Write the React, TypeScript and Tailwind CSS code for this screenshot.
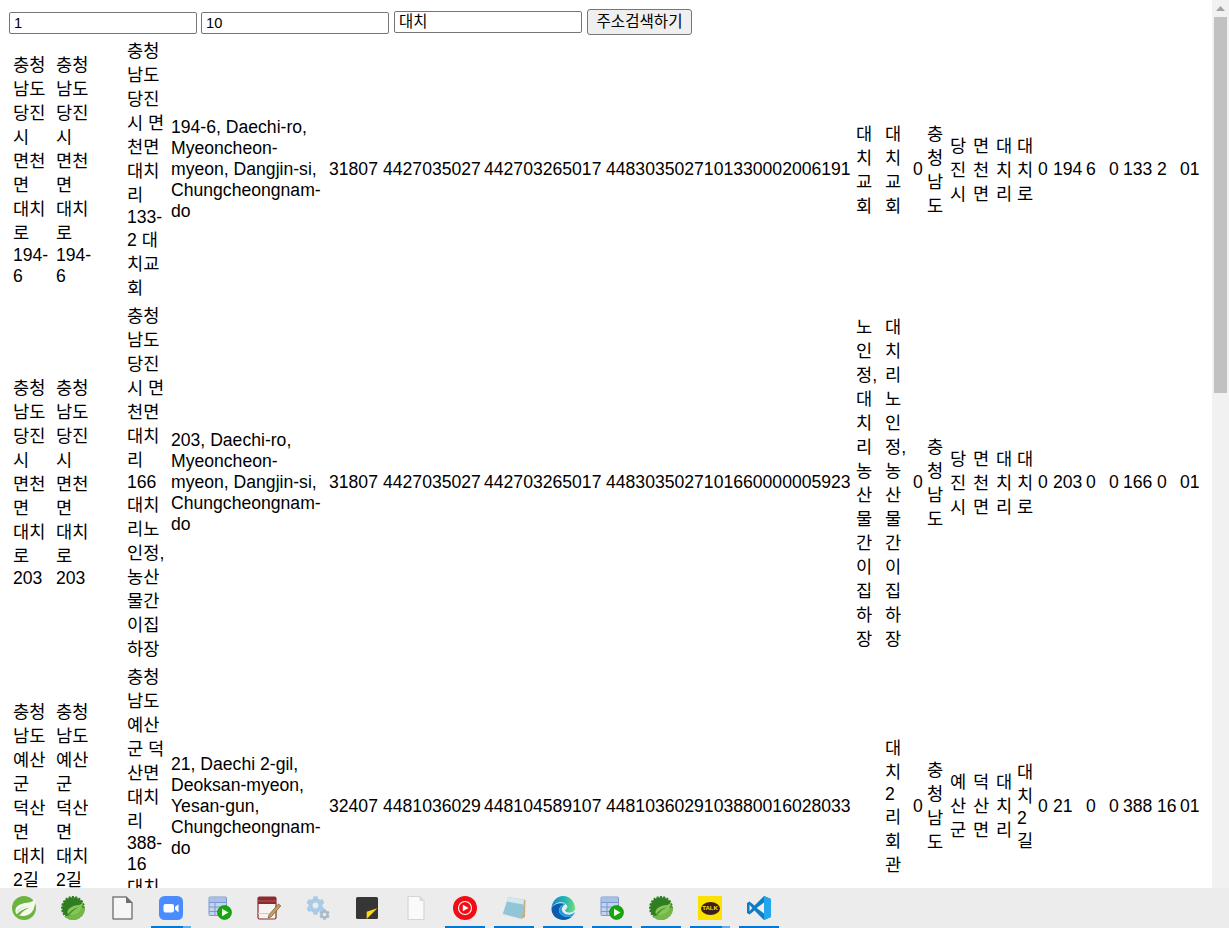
import { FaCog } from "react-icons/fa";

const rows: string[][] = [
  [
    "충청남도 당진시 면천면 대치로 194-6",
    "충청남도 당진시 면천면 대치로 194-6",
    "",
    "충청남도 당진시 면천면 대치리 133-2 대치교회",
    "194-6, Daechi-ro, Myeoncheon-myeon, Dangjin-si, Chungcheongnam-do",
    "31807",
    "4427035027",
    "442703265017",
    "4483035027101330002006191",
    "대치교회",
    "대치교회",
    "0",
    "충청남도",
    "당진시",
    "면천면",
    "대치리",
    "대치로",
    "0",
    "194",
    "6",
    "0",
    "133",
    "2",
    "01",
  ],
  [
    "충청남도 당진시 면천면 대치로 203",
    "충청남도 당진시 면천면 대치로 203",
    "",
    "충청남도 당진시 면천면 대치리 166 대치리노인정, 농산물간이집하장",
    "203, Daechi-ro, Myeoncheon-myeon, Dangjin-si, Chungcheongnam-do",
    "31807",
    "4427035027",
    "442703265017",
    "4483035027101660000005923",
    "노인정, 대치리 농산물간이집하장",
    "대치리 노인정, 농산물간이집하장",
    "0",
    "충청남도",
    "당진시",
    "면천면",
    "대치리",
    "대치로",
    "0",
    "203",
    "0",
    "0",
    "166",
    "0",
    "01",
  ],
  [
    "충청남도 예산군 덕산면 대치2길 21",
    "충청남도 예산군 덕산면 대치2길 21",
    "",
    "충청남도 예산군 덕산면 대치리 388-16 대치2리회관",
    "21, Daechi 2-gil, Deoksan-myeon, Yesan-gun, Chungcheongnam-do",
    "32407",
    "4481036029",
    "448104589107",
    "4481036029103880016028033",
    "",
    "대치2리회관",
    "0",
    "충청남도",
    "예산군",
    "덕산면",
    "대치리",
    "대치2길",
    "0",
    "21",
    "0",
    "0",
    "388",
    "16",
    "01",
  ],
];

const colWidths = [
  "w-[41px]", "w-[41px]", "w-[26px]", "w-[42px]", "w-[156px]", "w-[52px]",
  "w-[99px]", "w-[120px]", "w-[248px]", "w-[27px]", "w-[26px]", "w-[12px]",
  "w-[21px]", "w-[21px]", "w-[21px]", "w-[19px]", "w-[19px]", "w-[13px]",
  "w-[31px]", "w-[21px]", "w-[12px]", "w-[32px]", "w-[21px]", "w-[21px]",
];

// 한글 24px, 라틴 21px 줄 높이
const Mixed = ({ text }: { text: string }) => (
  <>
    {text.split(/([\uAC00-\uD7A3]+)/).map((part, i) =>
      part ? (
        <span key={i} className={i % 2 ? "leading-[24px]" : "leading-[21px]"}>
          {part}
        </span>
      ) : null,
    )}
  </>
);

const Spring = () => (
  <svg width="24" height="24" viewBox="0 0 24 24">
    <circle cx="12" cy="12" r="12" fill="#6db33f" />
    <path d="M23 2.500c-1.500 2.800-4 3.800-8 4.300C9 7.500 4.500 9.500 3.500 13.500c-.6 2.500.5 5 3.500 6 6 1.500 12-.5 14.500-6 1.500-3.500 2-7.500 1.500-11z" fill="#f4f8ef" />
    <path d="M4.500 18.500c3.500-3.800 7.500-5.800 13-7-4.500 2.200-7.500 4.500-10.500 8.500z" fill="#6db33f" />
    <path d="M6 17c.5-3.500 4-6 9-6.800-4 .2-8.500 1.500-10 5z" fill="#cfe5bd" />
  </svg>
);

const Sts = () => (
  <svg width="24" height="24" viewBox="0 0 24 24">
    <circle cx="12" cy="12" r="10.800" fill="#2f7f22" stroke="#2f7f22" strokeWidth="2.400" strokeDasharray="2 1.300" />
    <path d="M24 11.500A12 12 0 0 1 3 20c4 .5 7-1 10-3.500 3.500-3 6-5 11-5z" fill="#74b84a" />
    <path d="M22 5.500c-1 2.600-3 3.400-6 3.800C11 10 7.300 12.400 6.500 15.500c-.4 1.700.5 3 2.300 3.300 5 .7 9.200-1.400 11.200-5.300 1.200-2.400 2.300-5.500 2-8z" fill="#86c557" />
    <path d="M7 18c2.700-3.500 6-5.500 11-6.800-4 2-7 4.200-9.500 7.300z" fill="#3f8f2a" />
  </svg>
);

const DocGrey = () => (
  <svg width="24" height="24" viewBox="0 0 24 24">
    <path d="M3 1h13l6 6v15.500a.5.5 0 0 1-.5.5h-18a.5.5 0 0 1-.5-.5z" fill="#f6f6f6" stroke="#7d7d7d" strokeWidth="1.500" />
    <path d="M16 .3l6.700 6.700H16z" fill="#6f6f6f" />
  </svg>
);

const Zoom = () => (
  <svg width="24" height="24" viewBox="0 0 24 24">
    <rect width="24" height="24" rx="5.500" fill="#4a8cff" />
    <rect x="4.500" y="8" width="10.500" height="8.500" rx="2" fill="#fff" />
    <path d="M16 11l3.500-2.800v8L16 13.500z" fill="#fff" />
  </svg>
);

const TableRun = () => (
  <svg width="24" height="24" viewBox="0 0 24 24">
    <rect x="1" y="1" width="17.500" height="18.500" rx="1" fill="#c3d4ee" stroke="#7b98cf" />
    <path d="M1 6.500h17.500M1 11h17.500M1 15.500h17.500M7 1v18.500" stroke="#7b98cf" />
    <rect x="1.500" y="1.500" width="16.500" height="4.500" fill="#a9c0e6" />
    <circle cx="16.500" cy="16.500" r="7" fill="#16a80f" stroke="#0c7d0a" strokeWidth="0.600" />
    <path d="M14 12.800l6.500 3.700-6.500 3.700z" fill="#f4fbe8" />
  </svg>
);

const Calendar = () => (
  <svg width="24" height="24" viewBox="0 0 24 24">
    <rect x="1" y="1" width="18" height="22" rx="1.500" fill="#f7f3ee" stroke="#8c2a2f" strokeWidth="1.200" />
    <rect x="1" y="1" width="18" height="7" fill="#8c2a2f" />
    <path d="M1 5h18" stroke="#b25a5d" />
    <path d="M1 17.500h11" stroke="#d8c9bd" />
    <path d="M21.500 8l2.300 1.800-9.300 10.700-3.300 1.500 1-3.500z" fill="#c9a25a" stroke="#5f5032" strokeWidth="0.700" />
  </svg>
);

const Gears = () => (
  <span className="relative block h-[24px] w-[24px]">
    <FaCog className="absolute left-0 top-0 text-[#a8cbe8]" size={19} />
    <FaCog className="absolute bottom-0 right-0 text-[#a9bac8]" size={11} />
  </span>
);

const Sticky = () => (
  <svg width="24" height="24" viewBox="0 0 24 24">
    <rect x="1" y="1" width="22" height="22" rx="1.500" fill="#363636" />
    <path d="M11.700 15.700L22.300 12.300 11.700 23z" fill="#fad81e" />
  </svg>
);

const BlankDoc = () => (
  <svg width="24" height="24" viewBox="0 0 24 24">
    <path d="M4 1.500a1 1 0 0 1 1-1h10.500l4.500 4.500V22.500a1 1 0 0 1-1 1H5a1 1 0 0 1-1-1z" fill="#fafafa" stroke="#d5d5d5" strokeWidth="1.200" />
    <path d="M15.500 .5V5H20z" fill="#dadada" />
  </svg>
);

const YtMusic = () => (
  <svg width="24" height="24" viewBox="0 0 24 24">
    <circle cx="12" cy="12" r="12" fill="#f20d16" />
    <circle cx="12" cy="12" r="6.500" fill="none" stroke="#fff" strokeWidth="1.100" />
    <path d="M9.800 8.800l5.800 3.200-5.800 3.200z" fill="#fff" />
  </svg>
);

const Notepad = () => (
  <svg width="24" height="24" viewBox="0 0 24 24">
    <path d="M8 1l15.500 3-.5 17-3.500 2L22 4z" fill="#c4b083" />
    <path d="M.7 18L6.300 1 22 4l-2.300 19z" fill="#93c5d8" />
    <path d="M6.300 1L22 4l-.6 4.500L4.800 5.500z" fill="#d3e8ef" />
    <path d="M.7 18l19 5 .3 1L1 19.500z" fill="#e8e8e8" />
  </svg>
);

const Edge = () => (
  <svg width="24" height="24" viewBox="0 0 24 24">
    <defs>
      <linearGradient id="edgeTop" x1="0" y1="0.500" x2="1" y2="0.600">
        <stop offset="0" stopColor="#0f86d6" />
        <stop offset="0.550" stopColor="#22b8b0" />
        <stop offset="1" stopColor="#6fdc7c" />
      </linearGradient>
    </defs>
    <path d="M.5 12C1 5 6 0 12 0c7 0 12 5.500 12 12.500 0 2.500-2.500 4-5.500 4-3.500 0-5-1.500-4-3 1-1 2.500-1.500 1.500-4C14.500 6.500 11 5.500 7.500 6.500 4 7.500 1.500 9.500.5 12z" fill="url(#edgeTop)" />
    <path d="M.5 12C0 19 5.500 24 12.500 24c3.500 0 6.500-1.500 8.500-3.500-4 1-9 .5-11.500-2.500-2-2.500-1.500-6 .5-8 1.500-1.500 4-2 4.500-2C10 6 2.500 7.500.5 12z" fill="#0a5db0" />
    <path d="M10 10c-2 2-2.500 5.500-.5 8 2.500 3 7.500 3.500 11.500 2.500 1.500-1.500 2.500-3 3-4.500-2 2-5 3-8 2.500-3-.5-6-3.500-5-6.500.5-1.500 2-3 3.500-4-1.500 0-3 .5-4.500 2z" fill="#1b9de2" />
  </svg>
);

const Kakao = () => (
  <span className="flex h-[24px] w-[24px] items-center justify-center bg-[#fae100]">
    <span className="flex h-[13px] w-[19px] items-center justify-center rounded-[50%] bg-[#3c1e1e] text-[6px] font-bold leading-none text-[#fae100]">
      TALK
    </span>
  </span>
);

const VsCode = () => (
  <svg width="24" height="24" viewBox="0 0 24 24">
    <path d="M17 0L7.500 9.500 2.500 5.500 0 7v10l2.500 1.500 5-4L17 24l7-3V3z" fill="#0f7cc4" />
    <path d="M17 0l7 3v18l-7 3z" fill="#23a6ec" />
    <path d="M17 6.500L9.700 12l7.300 5.500z" fill="#eef0f0" />
    <path d="M2.500 8.800L5.300 12l-2.800 3.200z" fill="#eef0f0" />
  </svg>
);

const apps = [
  { icon: <Spring />, bar: false, extra: false },
  { icon: <Sts />, bar: false, extra: false },
  { icon: <DocGrey />, bar: false, extra: false },
  { icon: <Zoom />, bar: true, extra: true },
  { icon: <TableRun />, bar: false, extra: false },
  { icon: <Calendar />, bar: false, extra: false },
  { icon: <Gears />, bar: false, extra: false },
  { icon: <Sticky />, bar: false, extra: false },
  { icon: <BlankDoc />, bar: false, extra: false },
  { icon: <YtMusic />, bar: true, extra: false },
  { icon: <Notepad />, bar: true, extra: false },
  { icon: <Edge />, bar: true, extra: false },
  { icon: <TableRun />, bar: true, extra: false },
  { icon: <Sts />, bar: true, extra: false },
  { icon: <Kakao />, bar: true, extra: true },
  { icon: <VsCode />, bar: true, extra: false },
];

export default function App() {
  return (
    <div className="flex h-screen flex-col overflow-hidden bg-white text-black [font-family:'Liberation_Sans','Noto_Sans_CJK_KR',sans-serif]">
      <div className="flex min-h-0 flex-1">
        <main className="min-w-0 flex-1 overflow-hidden pl-[9px]">
          <form className="flex h-[36px] items-start pt-[9px] text-[14.67px]">
            <input defaultValue="1" className="mt-[3px] h-[22px] w-[188px] rounded-[2px] border border-[#767676] px-[4px] outline-none" />
            <input defaultValue="10" className="ml-[4px] mt-[3px] h-[22px] w-[188px] rounded-[2px] border border-[#767676] px-[4px] outline-none" />
            <input defaultValue="대치" className="ml-[5px] mt-[2px] h-[22px] w-[188px] rounded-[2px] border border-[#767676] px-[4px] text-[15.4px] outline-none" />
            <button type="button" className="ml-[5px] h-[26px] w-[105px] rounded-[3px] border border-[#767676] bg-[#efefef] text-[15.6px]">
              주소검색하기
            </button>
          </form>
          <table className="ml-px w-[1192px] table-fixed border-separate border-spacing-[2px] text-[17.6px]">
            <colgroup>
              {colWidths.map((w, i) => (
                <col key={i} className={w} />
              ))}
            </colgroup>
            <tbody>
              {rows.map((row, r) => (
                <tr key={r}>
                  {row.map((cell, c) => (
                    <td
                      key={c}
                      className={
                        c < 2
                          ? "py-px pl-px pr-[3px] align-middle leading-[0]"
                          : "p-px align-middle leading-[0]"
                      }
                    >
                      <Mixed text={cell} />
                    </td>
                  ))}
                </tr>
              ))}
            </tbody>
          </table>
        </main>
        <aside className="flex w-[17px] shrink-0 flex-col bg-[#f1f1f1]">
          <div className="flex h-[17px] items-center justify-center">
            <svg width="9" height="5" viewBox="0 0 9 5">
              <path d="M4.500 0L9 5H0z" fill="#a3a3a3" />
            </svg>
          </div>
          <div className="mx-[2px] h-[376px] bg-[#c1c1c1]" />
        </aside>
      </div>
      <footer className="flex h-[40px] shrink-0 gap-[9px] bg-[#ececec] pl-[4px]">
        {apps.map((app, i) => (
          <div key={i} className="relative flex h-[40px] w-[40px] items-center justify-center">
            {app.icon}
            {app.bar && <div className="absolute bottom-0 left-0 h-[2px] w-full bg-[#0078d4]" />}
            {app.extra && <div className="absolute bottom-0 right-0 h-[2px] w-[8px] bg-[#66aee6]" />}
          </div>
        ))}
      </footer>
    </div>
  );
}
